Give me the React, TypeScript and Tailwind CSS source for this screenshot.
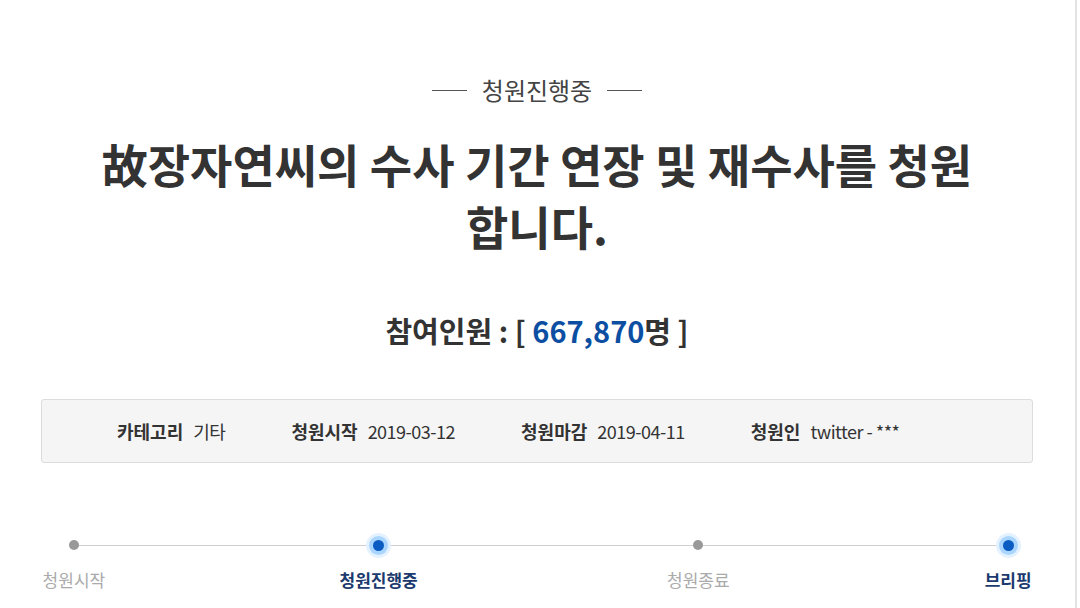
const font = { fontFamily: '"Noto Sans CJK KR", "Noto Sans", sans-serif' };

const infoItems = [
  { label: '카테고리', value: '기타' },
  { label: '청원시작', value: '2019-03-12' },
  { label: '청원마감', value: '2019-04-11' },
  { label: '청원인', value: 'twitter - ***' }
];

const steps = [
  { label: '청원시작', active: false, width: 'w-[66px]', gap: 'ml-0' },
  { label: '청원진행중', active: true, width: 'w-[100px]', gap: 'ml-[222px]' },
  { label: '청원종료', active: false, width: 'w-[100px]', gap: 'ml-[220px]' },
  { label: '브리핑', active: true, width: 'w-[50px]', gap: 'ml-[235px]' }
];

export default function App() {
  return (
    <div className="flex h-[608px] w-[1080px] overflow-hidden bg-white" style={font}>
      <main className="flex w-[1077px] flex-col border-r-2 border-[#e2e2e2] pl-[41px] pr-[42px]">
        <div className="mt-[74px] flex items-center justify-center gap-[15px] text-[24px] leading-[32px] text-[#444]">
          <span className="h-px w-[35px] bg-[#555]" />
          <span>청원진행중</span>
          <span className="h-px w-[35px] bg-[#555]" />
        </div>

        <h1 className="mt-[26px] text-center text-[46px] font-bold leading-[62px] text-[#333]">
          故장자연씨의 수사 기간 연장 및 재수사를 청원
          <br />
          합니다.
        </h1>

        <p className="mt-[54px] text-center text-[29px] font-bold leading-[40px] text-[#333]">
          참여인원 : [ <span className="text-[#0b4ea2]">667,870</span>명 ]
        </p>

        <div className="mt-[49px] flex h-[64px] items-center gap-[66px] rounded-[3px] border border-[#dcdcdc] bg-[#f5f5f5] pl-[75px] text-[18px] text-[#333]">
          {infoItems.map((item) => (
            <div className="flex items-center gap-[10px]" key={item.label}>
              <span className="font-bold">{item.label}</span>
              <span className="tracking-[-0.5px]">{item.value}</span>
            </div>
          ))}
        </div>

        <div className="relative mt-[68px]">
          <div className="absolute left-[32px] right-[23px] top-[14px] h-px bg-[#cfcfcf]" />
          <div className="relative flex">
            {steps.map((step) => (
              <div className={`flex flex-col items-center ${step.width} ${step.gap}`} key={step.label}>
                <div className="flex h-[28px] items-center justify-center">
                  {step.active ? (
                    <span className="h-[11px] w-[11px] rounded-full bg-[#0a5cc2] shadow-[0_0_0_4px_#a9d5ff,0_0_0_7px_#e4f2ff]" />
                  ) : (
                    <span className="h-[10px] w-[10px] rounded-full bg-[#999]" />
                  )}
                </div>
                <span
                  className={`mt-[9px] whitespace-nowrap text-[17px] leading-[24px] ${
                    step.active ? 'font-bold text-[#1b3a6e]' : 'text-[#aaa]'
                  }`}
                >
                  {step.label}
                </span>
              </div>
            ))}
          </div>
        </div>
      </main>
    </div>
  );
}
